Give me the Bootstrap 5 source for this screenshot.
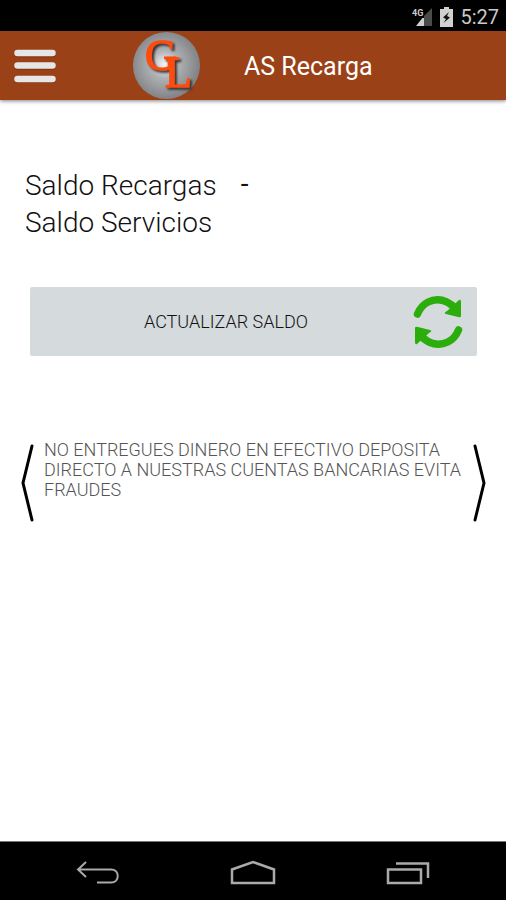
<!DOCTYPE html>
<html lang="es">
<head>
<meta charset="utf-8">
<meta name="viewport" content="width=device-width, initial-scale=1">
<title>AS Recarga</title>
<link rel="stylesheet" href="https://cdn.jsdelivr.net/npm/bootstrap@5.3.0/dist/css/bootstrap.min.css">
<style>
  body { font-family: Roboto, "Noto Sans", sans-serif; color: #111; background: #fff; }
  svg { display: block; flex: none; }
  .status-bar { height: 31px; padding: 3px 7px 0 0; gap: 7px; color: #c9c9c9; font-size: 20px; line-height: 28px; }
  .app-bar { height: 69px; padding: 0 14px; background: #9b4118; box-shadow: 0 1px 4px rgba(0, 0, 0, .5); }
  .app-logo { margin-left: 77px; }
  .app-logo text { filter: drop-shadow(2px 2px 1px #333); }
  .app-title { margin-left: 44px; font-size: 25px; line-height: 32px; padding-top: 3px; }
  .balances { margin-top: 67px; padding: 0 25px; font-size: 28px; line-height: 37px; }
  .balances dt { font-weight: 300; }
  .balances dd { margin-left: 24px; line-height: 33px; }
  .refresh-btn { margin: 46px 29px 0 30px; height: 69px; padding: 0 14px 0 114px; border-radius: 2px; background: #d5dadd; color: #111; font-size: 18px; font-weight: 300; }
  .refresh-btn:hover { background: #c8ced2; }
  .notice { margin: 84px 20px 0; gap: 9px; }
  .notice p { color: #555; font-size: 18px; font-weight: 300; line-height: 20px; }
  .nav-keys { height: 59px; padding: 4px 20px 0; border-top: 1px solid #777; }
  .nav-keys button:hover { opacity: .7; }
</style>
<script defer src="https://cdn.jsdelivr.net/npm/bootstrap@5.3.0/dist/js/bootstrap.bundle.min.js"></script>
</head>
<body class="d-flex flex-column min-vh-100">
  <div class="status-bar d-flex justify-content-end align-items-center bg-black">
    <svg width="21" height="22" viewBox="0 0 21 22" aria-hidden="true">
      <path d="M20 2V20H12V10z" fill="#4b4b4b"/>
      <path d="M12 10V20H4z" fill="#d0d0d0"/>
      <path d="M0 0H12V12H0z" fill="#000"/>
      <text x="0" y="10" font-size="9" font-weight="700" fill="#ccc">4G</text>
    </svg>
    <svg width="13" height="20" viewBox="0 0 13 20" aria-hidden="true">
      <path d="M4 0h5v2h4v18H0V2h4z" fill="#d0d0d0"/>
      <path d="M9 5 3 10.500 6 12 3.500 16 10 10.500 7 9z" fill="#111"/>
    </svg>
    <span>5:27</span>
  </div>

  <header class="app-bar d-flex align-items-center text-white">
    <button type="button" class="btn p-0 border-0" aria-label="Menú">
      <svg width="42" height="34" viewBox="0 0 42 34">
        <path d="M3.500 5h35M3.500 17.500h35M3.500 31h35" stroke="#5f2409" stroke-width="7" stroke-linecap="round" opacity=".35"/>
        <path d="M3.500 4h35M3.500 16.500h35M3.500 30h35" stroke="#e6e6e6" stroke-width="6.500" stroke-linecap="round"/>
      </svg>
    </button>
    <svg class="app-logo" width="67" height="67" viewBox="0 0 67 67" role="img" aria-label="GL">
      <defs>
        <radialGradient id="orb" cx=".47" cy=".48" r=".52">
          <stop offset="0" stop-color="#f4f4f6"/>
          <stop offset=".4" stop-color="#b0b1b5"/>
          <stop offset="1" stop-color="#828387"/>
        </radialGradient>
      </defs>
      <circle cx="33.500" cy="33.500" r="33.500" fill="url(#orb)"/>
      <text font-family="Liberation Serif, serif" font-size="44" stroke-width="1.500" fill="#ff4b0d" stroke="#ff4b0d"><tspan x="12" y="38">G</tspan><tspan x="32" y="55">L</tspan></text>
    </svg>
    <h1 class="app-title mb-0 fw-normal">AS Recarga</h1>
  </header>

  <main class="flex-grow-1">
    <dl class="balances mb-0">
      <div class="d-flex"><dt>Saldo Recargas</dt><dd class="mb-0">-</dd></div>
      <div class="d-flex"><dt>Saldo Servicios</dt><dd class="mb-0"></dd></div>
    </dl>

    <div class="d-grid">
      <button type="button" class="refresh-btn btn border-0 d-flex align-items-center justify-content-between">
        <span>ACTUALIZAR SALDO</span>
        <svg width="50" height="54" viewBox="0 0 50 54" aria-hidden="true">
          <g id="half">
            <path d="M4.500 19C9 7.500 20 3 30 5.500 35 7 38 9 41 12" fill="none" stroke="#2bad0b" stroke-width="7.500" stroke-linecap="round"/>
            <path d="M46 5Q48 4 48 7V21Q48 23 45 22L33 19Q30 18 34 16z" fill="#2bad0b"/>
          </g>
          <use href="#half" transform="rotate(180 25 27)"/>
        </svg>
      </button>
    </div>

    <section class="notice d-flex align-items-start" aria-label="Avisos">
      <button type="button" class="btn p-0 border-0 mt-1" aria-label="Anterior">
        <svg width="15" height="78" viewBox="0 0 15 78"><path d="M12 2 3 39 12 76" fill="none" stroke="#000" stroke-width="3" stroke-linecap="round"/></svg>
      </button>
      <p class="mb-0 flex-grow-1">NO ENTREGUES DINERO EN EFECTIVO DEPOSITA DIRECTO A NUESTRAS CUENTAS BANCARIAS EVITA FRAUDES</p>
      <button type="button" class="btn p-0 border-0 mt-1" aria-label="Siguiente">
        <svg width="15" height="78" viewBox="0 0 15 78"><path d="M4 2 13 39 4 76" fill="none" stroke="#000" stroke-width="3" stroke-linecap="round"/></svg>
      </button>
    </section>
  </main>

  <nav class="nav-keys d-flex justify-content-center align-items-center bg-black" aria-label="Sistema">
    <div class="row g-0 w-100 justify-content-center">
      <div class="col-4 d-flex justify-content-center">
        <button type="button" class="btn p-0 border-0" aria-label="Atrás">
          <svg width="44" height="26" viewBox="0 0 44 26" fill="none" stroke="#aaa" stroke-width="2"><path d="M10 2 2 9.500 10 17M3 9.500H35C44 9.500 44 22.500 35 22.500H21"/></svg>
        </button>
      </div>
      <div class="col-4 d-flex justify-content-center">
        <button type="button" class="btn p-0 border-0" aria-label="Inicio">
          <svg width="46" height="26" viewBox="0 0 46 26" fill="none" stroke="#aaa" stroke-width="2.500"><path d="M2 23V9.500L23 2 44 9.500V23z"/></svg>
        </button>
      </div>
      <div class="col-4 d-flex justify-content-center">
        <button type="button" class="btn p-0 border-0" aria-label="Recientes">
          <svg width="44" height="26" viewBox="0 0 44 26" fill="none" stroke="#aaa" stroke-width="2.500"><path d="M2 9.500H35V23H2zM10 3.500H42V18"/></svg>
        </button>
      </div>
    </div>
  </nav>
</body>
</html>
